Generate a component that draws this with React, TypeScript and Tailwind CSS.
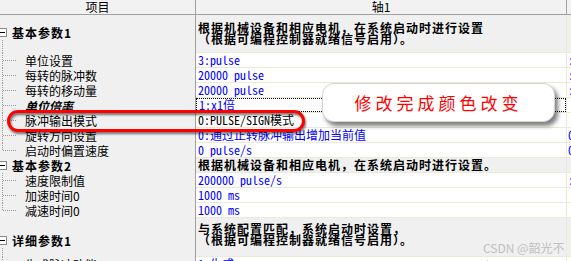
import type { ReactNode } from 'react';

type Item = {
  label: string;
  value?: string;
  edge?: string;
  black?: boolean;
  strong?: boolean;
  focus?: boolean;
};

type Group = {
  label: string;
  desc: string[];
  height: string;
  leftPad: string;
  rightPad: string;
  items: Item[];
};

const groups: Group[] = [
  {
    label: '基本参数1',
    desc: ['根据机械设备和相应电机，在系统启动时进行设置', '（根据可编程控制器就绪信号启用）。'],
    height: 'h-[38px]',
    leftPad: 'pt-[10px]',
    rightPad: 'pt-[7px]',
    items: [
      { label: '单位设置', value: '3:pulse', edge: ':' },
      { label: '每转的脉冲数', value: '20000 pulse', edge: ':' },
      { label: '每转的移动量', value: '20000 pulse', edge: ':' },
      { label: '单位倍率', value: '1:x1倍', strong: true, focus: true },
      { label: '脉冲输出模式', value: '0:PULSE/SIGN模式', black: true },
      { label: '旋转方向设置', value: '0:通过正转脉冲输出增加当前值', edge: '0' },
      { label: '启动时偏置速度', value: '0 pulse/s', edge: '0' },
    ],
  },
  {
    label: '基本参数2',
    desc: ['根据机械设备和相应电机，在系统启动时进行设置。'],
    height: 'h-[15px]',
    leftPad: 'pt-0',
    rightPad: 'pt-[1px]',
    items: [
      { label: '速度限制值', value: '200000 pulse/s', edge: ':' },
      { label: '加速时间0', value: '1000 ms' },
      { label: '减速时间0', value: '1000 ms' },
    ],
  },
  {
    label: '详细参数1',
    desc: ['与系统配置匹配，系统启动时设置，', '（根据可编程控制器就绪信号启用）。'],
    height: 'h-[39px]',
    leftPad: 'pt-[15px]',
    rightPad: 'pt-[5px]',
    items: [{ label: '生成脉冲功能', value: '1:生成', edge: ':' }],
  },
];

const sans = "font-['Noto_Sans_CJK_SC','Liberation_Sans',sans-serif]";
const mono = "font-['Noto_Sans_Mono_CJK_SC','Liberation_Mono','Noto_Sans_CJK_SC',monospace]";

function Minus() {
  return (
    <svg width="9" height="9" className="ml-[-2px] shrink-0">
      <rect x="0.5" y="0.5" width="8" height="8" fill="#fff" stroke="#8a8a8a" />
      <line x1="2" y1="4.5" x2="7" y2="4.5" stroke="#000" />
    </svg>
  );
}

function Branch({ last }: { last: boolean }) {
  return (
    <svg width="25" height="15" className="shrink-0">
      <line x1="2.5" y1="0" x2="2.5" y2={last ? 8 : 15} stroke="#9a9a9a" strokeDasharray="1 1" />
      <line x1="3" y1="7.5" x2="16" y2="7.5" stroke="#9a9a9a" strokeDasharray="1 1" />
    </svg>
  );
}

function Row({ left, right, edge, group, height }: { left: ReactNode; right: ReactNode; edge?: ReactNode; group?: boolean; height: string }) {
  const bg = group ? 'bg-[#f0f0f0]' : 'bg-white';
  return (
    <div className={`flex ${height} shrink-0`}>
      <div className="flex w-[196px] shrink-0 border-r border-[#a0a0a0] bg-[#f0f0f0]">{left}</div>
      <div className={`w-[371px] shrink-0 border-r border-b border-[#ebe9d8] ${bg} overflow-hidden`}>{right}</div>
      <div className={`flex-1 border-b border-[#ebe9d8] ${bg} overflow-hidden`}>{edge}</div>
    </div>
  );
}

export default function App() {
  return (
    <div className={`relative h-[261px] w-[571px] overflow-hidden bg-[#f0f0f0] text-[12px] text-black ${sans}`}>
      <div className="flex h-[15px] border-b border-[#a0a0a0] bg-[#f2f2f2] leading-[14px]">
        <div className="w-[196px] shrink-0 border-r border-[#a0a0a0] text-center">项目</div>
        <div className="w-[371px] shrink-0 border-r border-[#a0a0a0] text-center">轴1</div>
        <div className="flex-1" />
      </div>

      {groups.map((g) => (
        <div key={g.label} className="flex flex-col">
          <Row
            group
            height={g.height}
            left={
              <div className={`flex h-full flex-col ${g.leftPad}`}>
                <div className="flex h-[15px] items-center">
                  <Minus />
                  <span className="ml-[5px] text-[12px] font-bold tracking-[1px] leading-[15px]">{g.label}</span>
                </div>
                <div className="ml-[2px] flex-1 border-l border-dotted border-[#9a9a9a]" />
              </div>
            }
            right={
              <div className={`pl-[2px] text-[12px] font-bold tracking-[1px] leading-[11px] ${g.rightPad}`}>
                {g.desc.map((d) => (
                  <div key={d} className="whitespace-nowrap">{d}</div>
                ))}
              </div>
            }
          />
          {g.items.map((it, i) => (
            <Row
              key={it.label}
              height="h-[15px]"
              left={
                <div className="flex items-center">
                  <Branch last={i === g.items.length - 1} />
                  <span className={`whitespace-nowrap leading-[15px] ${it.strong ? 'font-bold italic' : ''}`}>{it.label}</span>
                </div>
              }
              right={
                <div
                  className={`flex h-full items-center whitespace-nowrap pl-[2px] ${mono} text-[12px] ${it.black ? 'text-black' : 'text-[#0000ff]'} ${it.focus ? 'border border-dotted border-black' : ''}`}
                >
                  {it.value}
                </div>
              }
              edge={<div className={`pl-[1px] leading-[14px] ${mono} text-[#0000ff]`}>{it.edge}</div>}
            />
          ))}
        </div>
      ))}

      <div className="pointer-events-none absolute left-[7px] top-[110px] h-[22px] w-[298px] rounded-full border-[3px] border-[#ff0000] drop-shadow-[1px_2px_1px_rgba(0,0,0,0.55)]" />

      <div className="absolute left-[322px] top-[83px] flex h-[39px] w-[233px] items-center justify-center rounded-[12px] border border-[#d4d4d4] bg-white shadow-[3px_4px_4px_rgba(0,0,0,0.5)]">
        <span className="text-[17px] tracking-[4px] text-[#ff0000]">修改完成颜色改变</span>
      </div>

      <div className="absolute left-[483px] top-[239px] text-[12px] text-[#c0c0c0]">CSDN @韶光不负</div>
    </div>
  );
}
